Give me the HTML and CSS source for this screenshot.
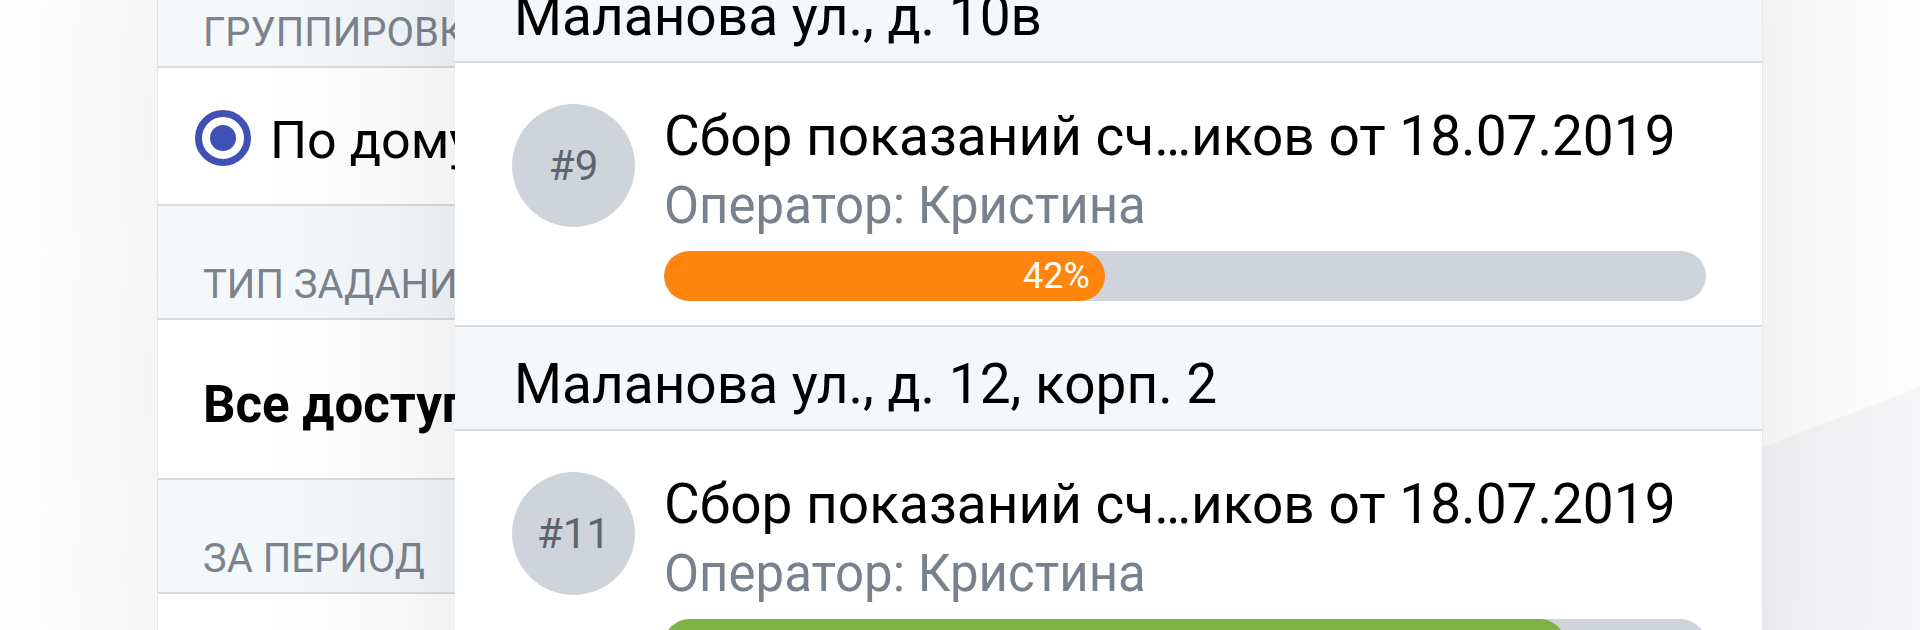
FILE: index.html
```html
<!DOCTYPE html>
<html lang="ru">
<head>
<meta charset="utf-8">
<title>Задания</title>
<link rel="stylesheet" href="styles.css">
</head>
<body>
<div class="device">
  <aside class="filters">
    <div class="lhead">ГРУППИРОВКА</div>
    <div class="radio-row"><span class="radio"></span><span class="rtext">По дому</span></div>
    <div class="lhead">ТИП ЗАДАНИЯ</div>
    <div class="value-row">Все доступные</div>
    <div class="lhead">ЗА ПЕРИОД</div>
  </aside>
  <main class="tasks">
    <div class="group-head">Маланова ул., д. 10в</div>
    <div class="task">
      <div class="avatar">#9</div>
      <div class="task-body">
        <div class="task-title">Сбор показаний сч…иков от 18.07.2019</div>
        <div class="task-op">Оператор: Кристина</div>
        <div class="bar"><div class="fill orange" style="width:42.3%"><span>42%</span></div></div>
      </div>
    </div>
    <div class="group-head">Маланова ул., д. 12, корп. 2</div>
    <div class="task">
      <div class="avatar">#11</div>
      <div class="task-body">
        <div class="task-title">Сбор показаний сч…иков от 18.07.2019</div>
        <div class="task-op">Оператор: Кристина</div>
        <div class="bar"><div class="fill green" style="width:86.5%"><span>87%</span></div></div>
      </div>
    </div>
  </main>
</div>
</body>
</html>
```
FILE: styles.css
```css
body {
  margin: 0;
  width: 1920px;
  height: 630px;
  overflow: hidden;
  background: #fff;
  font-family: Roboto, "Noto Sans", sans-serif;
  position: relative;
}
body::before {
  content: "";
  position: absolute;
  inset: 0;
  background: #f7f7fa;
  clip-path: polygon(1284px 630px, 1920px 387px, 1920px 630px);
}
.device {
  position: relative;
  display: flex;
  margin-left: 157px;
  margin-top: -200px;
  height: 1030px;
}
.filters {
  flex: none;
  width: 298px;
  box-sizing: border-box;
  border-left: 1px solid #e4e4e4;
  background: #fff;
  padding-top: 154px;
  overflow: hidden;
  white-space: nowrap;
  box-shadow: 0 0 200px rgba(0, 0, 0, 0.1);
}
.lhead {
  box-sizing: border-box;
  height: 114px;
  border-bottom: 2px solid #d8dce1;
  background: #f5f8fb;
  padding: 54px 0 0 45px;
  font-size: 40px;
  line-height: 50px;
  color: #7b848e;
}
.radio-row {
  box-sizing: border-box;
  height: 138px;
  border-bottom: 2px solid #d8dce1;
  display: flex;
  align-items: center;
  padding: 4px 0 0 37px;
  gap: 19px;
}
.radio {
  flex: none;
  box-sizing: border-box;
  width: 56px;
  height: 56px;
  border: 7px solid #3f51b5;
  border-radius: 50%;
  display: flex;
  align-items: center;
  justify-content: center;
}
.radio::after {
  content: "";
  width: 26px;
  height: 26px;
  border-radius: 50%;
  background: #3f51b5;
}
.rtext {
  font-size: 52px;
  line-height: 60px;
  color: #000;
  margin-top: 5px;
}
.value-row {
  box-sizing: border-box;
  height: 160px;
  border-bottom: 2px solid #d8dce1;
  padding: 55px 0 0 45px;
  font-size: 51px;
  line-height: 60px;
  font-weight: 700;
  color: #000;
}
.tasks {
  flex: none;
  width: 1308px;
  box-sizing: border-box;
  border-right: 1px solid #e6e7ea;
  background: #fff;
  padding-top: 159px;
  overflow: hidden;
  box-shadow: 0 0 200px rgba(0, 0, 0, 0.1);
}
.group-head {
  box-sizing: border-box;
  height: 104px;
  border-bottom: 2px solid #d8dce1;
  background: #f5f8fb;
  padding: 25px 0 0 59px;
  font-size: 55px;
  line-height: 64px;
  color: #000;
  white-space: nowrap;
}
.task {
  box-sizing: border-box;
  height: 264px;
  border-bottom: 2px solid #d8dce1;
  display: flex;
  align-items: flex-start;
  padding: 41px 56px 0 57px;
  gap: 29px;
}
.avatar {
  flex: none;
  width: 123px;
  height: 123px;
  border-radius: 50%;
  background: #cfd4da;
  color: #5e656e;
  font-size: 42px;
  display: flex;
  align-items: center;
  justify-content: center;
}
.task-body {
  flex: 1;
  min-width: 0;
  padding-top: 2px;
}
.task-title {
  font-size: 55px;
  line-height: 60px;
  white-space: nowrap;
  color: #000;
}
.task-op {
  font-size: 51px;
  line-height: 56px;
  color: #79828c;
  margin-top: 12px;
}
.bar {
  margin-top: 17px;
  height: 50px;
  border-radius: 25px;
  background: #cfd4db;
  overflow: hidden;
}
.fill {
  box-sizing: border-box;
  height: 100%;
  border-radius: 25px;
  display: flex;
  justify-content: flex-end;
  align-items: center;
  padding-right: 15px;
  color: #fff;
  font-size: 36px;
}
.orange { background: #ff850f; }
.green { background: #7cb342; }
```
